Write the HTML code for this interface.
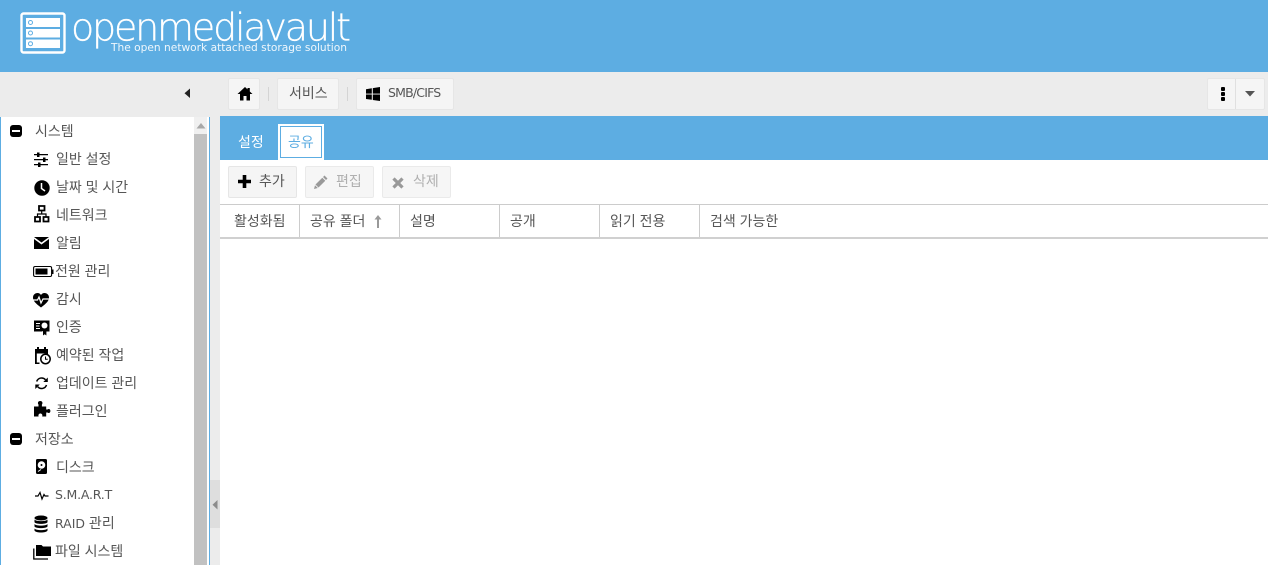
<!DOCTYPE html>
<html lang="ko"><head><meta charset="utf-8"><title>openmediavault</title>
<style>
html,body{margin:0;padding:0;width:1268px;height:565px;overflow:hidden;background:#ececec}
body{position:relative;font-family:"Liberation Sans","Noto Sans CJK KR",sans-serif;font-size:14px;color:#565656}
.a{position:absolute}
.t{position:absolute;white-space:nowrap;line-height:16px;margin-top:1px}
.l{font-family:"DejaVu Sans",sans-serif;font-size:12.500px}
.btn{position:absolute;box-sizing:border-box;background:#f5f5f5;border:1px solid #e6e6e6;border-radius:2px}
.i{position:absolute}
</style></head><body>
<div class="a" style="left:0;top:0;width:1268px;height:72px;background:#5dade2"></div>
<svg class="a" style="left:0;top:0" width="360" height="72">
<rect x="21.500" y="13.500" width="43" height="39" rx="2" fill="none" stroke="#fff" stroke-width="2.400"/>
<g fill="#fff"><rect x="26" y="18" width="34" height="9"/><rect x="26" y="29" width="34" height="8.500"/><rect x="26" y="39.500" width="34" height="8.500"/></g>
<g fill="none" stroke="#5dade2"><circle cx="30.500" cy="22.500" r="2"/><circle cx="30.500" cy="33" r="2"/><circle cx="30.500" cy="43.700" r="2"/></g>
<text x="71" y="40.500" fill="#fff" stroke="#fff" stroke-width=".3" font-family="'DejaVu Sans ExtraLight','DejaVu Sans Light','Liberation Sans',sans-serif" font-weight="200" font-size="38" textLength="280" lengthAdjust="spacing">openmediavault</text>
<text x="111" y="51" fill="#fff" fill-opacity=".9" font-family="'DejaVu Sans',sans-serif" font-size="10.500" textLength="236" lengthAdjust="spacingAndGlyphs">The open network attached storage solution</text>
</svg>

<svg class="i" style="left:184px;top:88px" width="7" height="11"><path d="M6 0.500V10L0.500 5.200Z" fill="#222"/></svg>
<div class="btn" style="left:228px;top:78px;width:32px;height:32px"></div>
<svg class="i" style="left:237px;top:86px" width="16" height="15"><path d="M8 1L.5 8H3V14.500H6.500V10H9.500V14.500H13V8H15.500L12.800 5.500V2H10.500V3.400Z" fill="#000"/></svg>
<div class="a" style="left:268px;top:87px;width:1px;height:14px;background:#d4d4d4"></div>
<div class="btn" style="left:277px;top:78px;width:62px;height:32px"></div>
<div class="t" style="left:289px;top:84px">서비스</div>
<div class="a" style="left:347px;top:87px;width:1px;height:14px;background:#d4d4d4"></div>
<div class="btn" style="left:356px;top:78px;width:98px;height:32px"></div>
<svg class="i" style="left:366px;top:87px" width="14" height="14"><path d="M0 2.200L5.800 1.300V6.600H0ZM6.800 1.100L14 0V6.600H6.800ZM0 7.500H5.800V12.800L0 12ZM6.800 7.500H14V14L6.800 13Z" fill="#000"/></svg>
<div class="t l" style="left:388px;top:84px;letter-spacing:-.8px">SMB/CIFS</div>
<div class="btn" style="left:1207px;top:78px;width:58px;height:32px"></div>
<div class="a" style="left:1235px;top:79px;width:1px;height:30px;background:#e0e0e0"></div>
<div class="a" style="left:1221px;top:87px;width:4px;height:4px;background:#000;border-radius:1px"></div>
<div class="a" style="left:1221px;top:92px;width:4px;height:4px;background:#000;border-radius:1px"></div>
<div class="a" style="left:1221px;top:97px;width:4px;height:4px;background:#000;border-radius:1px"></div>
<svg class="i" style="left:1245px;top:91px" width="11" height="6"><path d="M0 0H10L5 5.500Z" fill="#555"/></svg>

<!-- sidebar -->
<div class="a" style="left:0;top:117px;width:210px;height:448px;box-sizing:border-box;background:#fff;border:1px solid #5dade2;border-width:0 1px"></div>
<div class="a" style="left:194px;top:117px;width:13px;height:448px;background:#f0f0f0"></div>
<div class="a" style="left:194px;top:134px;width:13px;height:431px;background:#c1c1c1"></div>
<svg class="i" style="left:196px;top:123px" width="10" height="6"><path d="M5 0L9.500 5.500H.5Z" fill="#a8a8a8"/></svg>
<div class="a" style="left:210px;top:480px;width:10px;height:48px;background:#dedede"></div>
<svg class="i" style="left:212px;top:500px" width="6" height="10"><path d="M5.500 0V9.500L.5 4.800Z" fill="#8c8c8c"/></svg>

<div class="a" style="left:10px;top:125px;width:12px;height:12px;background:#000;border-radius:3px"></div><div class="a" style="left:12px;top:130px;width:8px;height:2px;background:#fff"></div>
<div class="t" style="left:35px;top:122px">시스템</div>
<div class="a" style="left:10px;top:433px;width:12px;height:12px;background:#000;border-radius:3px"></div><div class="a" style="left:12px;top:438px;width:8px;height:2px;background:#fff"></div>
<div class="t" style="left:35px;top:430px">저장소</div>

<div class="t" style="left:56px;top:150px">일반 설정</div>
<div class="t" style="left:56px;top:178px">날짜 및 시간</div>
<div class="t" style="left:56px;top:206px">네트워크</div>
<div class="t" style="left:56px;top:234px">알림</div>
<div class="t" style="left:55px;top:262px">전원 관리</div>
<div class="t" style="left:56px;top:290px">감시</div>
<div class="t" style="left:56px;top:318px">인증</div>
<div class="t" style="left:56px;top:346px">예약된 작업</div>
<div class="t" style="left:56px;top:374px">업데이트 관리</div>
<div class="t" style="left:56px;top:402px">플러그인</div>
<div class="t" style="left:56px;top:458px">디스크</div>
<div class="t l" style="left:55px;top:486px;letter-spacing:-.2px">S.M.A.R.T</div>
<div class="t" style="left:55px;top:514px"><span class="l">RAID</span> 관리</div>
<div class="t" style="left:55px;top:542px">파일 시스템</div>

<svg class="a" style="left:30px;top:116px" width="24" height="449" fill="#000">
<!-- sliders -->
<path d="M4 38h14v1.300H4zM4 43h14v1.300H4zM4 48h14v1.300H4z"/><rect x="7" y="36.500" width="2.500" height="4.500"/><rect x="13" y="41.500" width="2.500" height="4.500"/><rect x="8" y="46.500" width="2.500" height="4.500"/>
<!-- clock -->
<circle cx="12" cy="72" r="7.700"/><path d="M11.500 67v5.500l3.500 2.500" fill="none" stroke="#fff" stroke-width="1.500"/>
<!-- network -->
<path d="M9 90h5.500v4.500H9zM5 101h5v4.500H5zM13.500 101h5v4.500h-5z" fill="none" stroke="#000" stroke-width="1.800"/><path d="M11.700 94.500v3.500M7.500 101v-3h8.500v3" fill="none" stroke="#000" stroke-width="1.200"/>
<!-- mail -->
<path d="M4 121h15l-7.500 5.500zM4 123l7.500 5.500 7.500-5.500V133H4z"/>
<!-- battery -->
<rect x="3.600" y="150.500" width="18" height="10" rx="1.500" fill="none" stroke="#000" stroke-width="1.100"/><rect x="5.500" y="152.500" width="12" height="6"/><rect x="22" y="153.500" width="1.500" height="4.500"/>
<!-- heartbeat -->
<path d="M11 191.500C5 187 3 184.500 3 181.500C3 178.500 5.500 177 7.500 177C9 177 10.200 177.800 11 179C11.800 177.800 13 177 14.500 177C16.500 177 19 178.500 19 181.500C19 184.500 17 187 11 191.500Z"/><path d="M2.500 184h5l1.500-3 2 6 2-4h6" fill="none" stroke="#fff" stroke-width="1.200"/>
<!-- certificate -->
<path d="M4 204.500h15.500v11H16l-2-1-2 1H4z"/><path d="M6 207.500h4M6 210h3.500M6 212.500h4" stroke="#fff" stroke-width="1" fill="none"/><circle cx="14.500" cy="209.500" r="3" fill="#fff"/><path d="M13 214.500v5l1.700-1.200 1.700 1.200v-5z"/>
<!-- calendar clock -->
<path d="M5 233h13v6.500h-1.800V237.500H6.800v9H9.500V248H5z"/><rect x="7" y="231" width="2" height="3"/><rect x="14" y="231" width="2" height="3"/>
<circle cx="15.500" cy="243" r="4.700" fill="#fff" stroke="#000" stroke-width="1.500"/><path d="M15.500 240.500v2.700h2.200" fill="none" stroke="#000" stroke-width="1"/>
<!-- refresh -->
<path d="M6.700 265.500a5.200 5.200 0 0 1 8.800-1.800M16.500 269a5.200 5.200 0 0 1-8.800 1.800" fill="none" stroke="#000" stroke-width="1.500"/><path d="M17.800 261.500v4.500h-4.500zM5.300 273v-4.500h4.500z"/>
<!-- puzzle -->
<path d="M4 290.500h4.500v-2c-1-1-.8-3.500 1.700-3.500s2.700 2.500 1.700 3.500v2h4.300v3h1.300c1-.9 2.900-.7 2.900 1.500s-1.900 2.400-2.900 1.500h-1.300v4h-4c.6-1.700-.4-3-1.800-3s-2.400 1.300-1.800 3H4z"/>
<!-- disk -->
<rect x="6" y="343" width="11" height="15" rx="1.500"/><circle cx="11.500" cy="349" r="3.800" fill="#fff"/><circle cx="11.500" cy="349" r="1"/><path d="M8 355.500l3-2" stroke="#fff" stroke-width="1"/>
<!-- smart -->
<path d="M5 380h3l2-3.500 2 6.500 2-4.500 1 1.500h3.500" fill="none" stroke="#000" stroke-width="1.200"/>
<!-- database -->
<ellipse cx="11" cy="402" rx="6.500" ry="2.500"/><path d="M4.500 403.500c1.500 2.200 11.500 2.200 13 0v2.700c-1.500 2.200-11.500 2.200-13 0zM4.500 408c1.500 2.200 11.500 2.200 13 0v2.500c-1.500 2.200-11.500 2.200-13 0zM4.500 412.500c1.500 2.200 11.500 2.200 13 0v2c-1 2.700-12 2.700-13 0z"/>
<!-- folders -->
<path d="M6 429h5.500l1.500 1.500H21V440H6z"/><path d="M3.800 432.500V443H18" fill="none" stroke="#000" stroke-width="1.300"/>
</svg>

<!-- main -->
<div class="a" style="left:220px;top:116px;width:1048px;height:449px;background:#fff"></div>
<div class="a" style="left:220px;top:116px;width:1048px;height:44px;background:#5dade2"></div>
<div class="t" style="left:238px;top:133px;color:#fff">설정</div>
<div class="a" style="left:278px;top:124px;width:46px;height:36px;background:#fff"></div>
<div class="a" style="left:280px;top:126px;width:42px;height:32px;box-sizing:border-box;border:1px solid #5dade2"></div>
<div class="t" style="left:288px;top:133px;color:#5dade2">공유</div>

<div class="btn" style="left:228px;top:166px;width:69px;height:32px"></div>
<svg class="i" style="left:238px;top:175px" width="13" height="13"><path d="M4.700 0h3.600v4.700H13v3.600H8.300V13H4.700V8.300H0V4.700h4.700z" fill="#000"/></svg>
<div class="t" style="left:259px;top:172px">추가</div>
<div class="btn" style="left:305px;top:166px;width:69px;height:32px;opacity:.8"></div>
<svg class="i" style="left:314px;top:175px" width="14" height="14"><path d="M10.500.5l3 3-1.500 1.500-3-3zM8.300 2.700l3 3L4.500 12.500l-3-3zM1 10.200l2.800 2.800L0 14z" fill="#999"/></svg>
<div class="t" style="left:336px;top:172px;color:#b0b0b0">편집</div>
<div class="btn" style="left:382px;top:166px;width:69px;height:32px;opacity:.8"></div>
<svg class="i" style="left:392px;top:177px" width="12" height="12"><path d="M1.500 1.500l9 9M10.500 1.500l-9 9" stroke="#999" stroke-width="3.200"/></svg>
<div class="t" style="left:413px;top:172px;color:#b0b0b0">삭제</div>

<div class="a" style="left:220px;top:204px;width:1048px;height:1px;background:#ccc"></div>
<div class="a" style="left:220px;top:237px;width:1048px;height:2px;background:#d0d0d0"></div>
<div class="a" style="left:299px;top:205px;width:1px;height:32px;background:#ccc"></div>
<div class="a" style="left:399px;top:205px;width:1px;height:32px;background:#ccc"></div>
<div class="a" style="left:499px;top:205px;width:1px;height:32px;background:#ccc"></div>
<div class="a" style="left:599px;top:205px;width:1px;height:32px;background:#ccc"></div>
<div class="a" style="left:699px;top:205px;width:1px;height:32px;background:#ccc"></div>
<div class="t" style="left:234px;top:212px">활성화됨</div>
<div class="t" style="left:310px;top:212px">공유 폴더</div>
<svg class="i" style="left:373px;top:214px" width="10" height="15"><path d="M5 1L8.500 5.500H6V14H4V5.500H1.500Z" fill="#999"/></svg>
<div class="t" style="left:410px;top:212px">설명</div>
<div class="t" style="left:510px;top:212px">공개</div>
<div class="t" style="left:610px;top:212px">읽기 전용</div>
<div class="t" style="left:710px;top:212px">검색 가능한</div>
</body></html>
